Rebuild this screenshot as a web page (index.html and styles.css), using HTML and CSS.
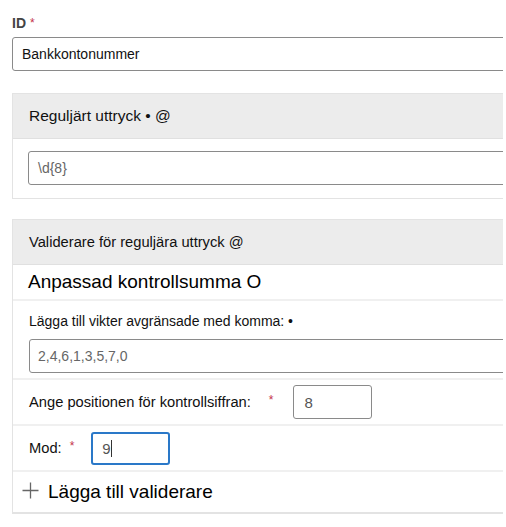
FILE: index.html
```html
<!DOCTYPE html>
<html lang="sv">
<head>
<meta charset="utf-8">
<link rel="stylesheet" href="styles.css">
</head>
<body>
<div class="clip">
<div class="page">
  <div class="field-label">ID <span class="req">*</span></div>
  <div class="input input-id">Bankkontonummer</div>

  <section class="panel panel-regex">
    <div class="panel-head">Reguljärt uttryck • @</div>
    <div class="panel-body">
      <div class="input input-regex">\d{8}</div>
    </div>
  </section>

  <section class="panel panel-valid">
    <div class="panel-head head-valid">Validerare för reguljära uttryck @</div>
    <div class="row row-title">Anpassad kontrollsumma O</div>
    <div class="row row-weights">
      <div class="small-label">Lägga till vikter avgränsade med komma: •</div>
      <div class="input input-weights">2,4,6,1,3,5,7,0</div>
    </div>
    <div class="row row-pos">
      <span class="lbl">Ange positionen för kontrollsiffran:</span>
      <span class="req req-pos">*</span>
      <div class="input input-small">8</div>
    </div>
    <div class="row row-mod">
      <span class="lbl">Mod:</span>
      <span class="req req-mod">*</span>
      <div class="input input-small input-focus">9<span class="caret"></span></div>
    </div>
    <div class="row row-add">
      <svg class="plus" width="17" height="17" viewBox="0 0 17 17"><path d="M8.5 0.5v16M0.5 8.5h16" stroke="#666" stroke-width="1.3" fill="none"/></svg>
      <span class="add-text">Lägga till validerare</span>
    </div>
  </section>
</div>
</div>
</body>
</html>
```

FILE: styles.css
```css
html, body {
  margin: 0;
  padding: 0;
  background: #fff;
}
body {
  font-family: "Liberation Sans", Arial, sans-serif;
  color: #111;
}
.clip {
  margin-left: 12px;
  width: 491px;
  overflow: hidden;
}
.page {
  width: 520px;
  padding-top: 15px;
  display: flex;
  flex-direction: column;
}
.field-label {
  font-size: 14px;
  font-weight: bold;
  color: #444;
  height: 22px;
  line-height: 16px;
}
.req {
  color: #c4314b;
  font-weight: normal;
  font-size: 12px;
  vertical-align: top;
}
.input {
  box-sizing: border-box;
  border: 1.5px solid #8a8a8a;
  border-radius: 3px;
  height: 34px;
  display: flex;
  align-items: center;
  padding-left: 9px;
  font-size: 14px;
  color: #111;
}
.input-id {
  margin-bottom: 22px;
}
.panel {
  border: 1px solid #e3e3e3;
  border-right: none;
}
.panel-head {
  background: #ececec;
  height: 44px;
  display: flex;
  align-items: center;
  padding-left: 16px;
  font-size: 15.5px;
  color: #111;
  border-bottom: 1px solid #e0e0e0;
}
.panel-body {
  padding: 12px 0 13px 15px;
}
.input-regex {
  color: #666;
  font-size: 14px;
  padding-left: 9px;
}
.panel-regex {
  margin-bottom: 20px;
}
.head-valid {
  font-size: 14.7px;
}
.row {
  border-bottom: 2px solid #f0f0f0;
}
.row-title {
  height: 34px;
  display: flex;
  align-items: center;
  padding-left: 15px;
  font-size: 19px;
  color: #000;
}
.row-weights {
  padding: 12px 0 5px 16px;
}
.small-label {
  font-size: 14px;
  height: 26px;
  color: #111;
}
.input-weights {
  font-size: 14px;
  color: #666;
  padding-left: 8px;
}
.row-pos, .row-mod {
  display: flex;
  align-items: center;
  padding-left: 16px;
  height: 44px;
}
.lbl {
  font-size: 14.7px;
  color: #111;
}
.req-pos {
  margin-left: 18px;
  margin-top: -4px;
}
.req-mod {
  margin-left: 8px;
  margin-top: -4px;
}
.input-small {
  width: 79px;
  font-size: 15px;
  color: #555;
  padding-left: 10px;
}
.row-pos .input-small {
  margin-left: 20px;
}
.row-mod .input-small {
  margin-left: 17px;
  height: 33px;
}
.input-focus {
  border: 2px solid #2a78c8;
  padding-left: 9px;
}
.caret {
  display: inline-block;
  width: 1px;
  height: 17px;
  background: #333;
}
.row-add {
  height: 40px;
  display: flex;
  align-items: center;
  padding-left: 9px;
  border-bottom: 1px solid #e3e3e3;
}
.plus {
  margin-right: 9px;
  margin-top: -4px;
}
.add-text {
  font-size: 19px;
  color: #000;
}
```
